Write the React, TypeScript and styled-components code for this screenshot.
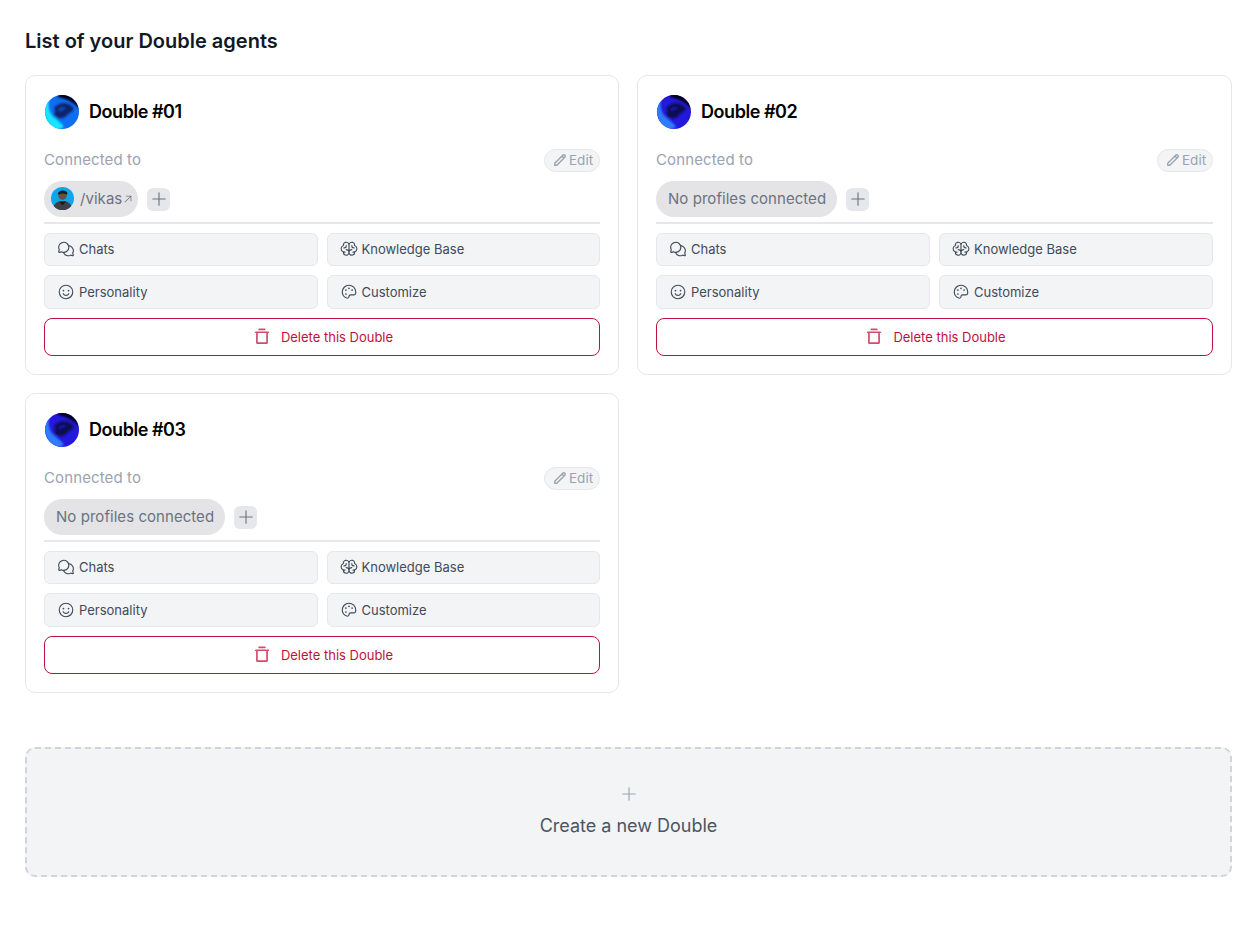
import React from 'react';
import styled, { createGlobalStyle } from 'styled-components';
import { PiChatsCircle, PiBrain, PiSmiley, PiPalette, PiTrashSimpleBold, PiPlus, PiArrowUpRight } from 'react-icons/pi';
import { HiOutlinePencil } from 'react-icons/hi';

const GlobalStyle = createGlobalStyle`
    html, body {
        margin: 0;
        padding: 0;
        background: #fff;
        font-family: Inter, "Liberation Sans", sans-serif;
    }
    * {
        box-sizing: border-box;
    }
`;

const Page = styled.main`
    padding: 29px 27px 60px 25px;
    min-height: 938px;
`;

const Heading = styled.h1`
    margin: 0 0 21px;
    font-size: 20px;
    line-height: 25px;
    font-weight: 600;
    color: #111827;
`;

const CardGrid = styled.div`
    display: grid;
    grid-template-columns: 594px 1fr;
    gap: 18px;
`;

const Card = styled.section`
    height: 300px;
    padding: 19px 18px 18px 18px;
    border: 1px solid #e5e7eb;
    border-radius: 10px;
    display: flex;
    flex-direction: column;
`;

const CardHeader = styled.div`
    display: flex;
    align-items: center;
    gap: 10px;
    height: 34px;
    padding-left: 1px;
`;

const Title = styled.h2`
    margin: 0 0 2px;
    font-size: 18px;
    font-weight: 600;
    letter-spacing: -0.025em;
    color: #000;
`;

const ConnectedRow = styled.div`
    display: flex;
    align-items: center;
    justify-content: space-between;
    margin-top: 20px;
    height: 23px;
`;

const ConnectedLabel = styled.span`
    padding-bottom: 2px;
    font-size: 15px;
    letter-spacing: 0.12px;
    color: #9ca3af;
`;

const EditButton = styled.button`
    display: flex;
    align-items: center;
    gap: 2px;
    width: 56px;
    height: 23px;
    padding: 0 0 1px 8px;
    background: #f3f4f6;
    border: 1px solid #e5e7eb;
    border-radius: 12px;
    font: 400 13.5px Inter, sans-serif;
    color: #9ca3af;
`;

const ProfileRow = styled.div`
    display: flex;
    align-items: center;
    gap: 9px;
    margin-top: 9px;
    height: 36px;
`;

const ProfilePill = styled.div<{ $linked?: boolean }>`
    display: flex;
    align-items: center;
    gap: 6px;
    height: 36px;
    padding: ${(p) => (p.$linked ? '0 4px 1px 7px' : '0 11px 1px 12px')};
    background: #e4e4e7;
    border-radius: 18px;
    font-size: 15px;
    letter-spacing: 0.05px;
    color: #6b7280;
`;

const AddButton = styled.button`
    display: flex;
    align-items: center;
    justify-content: center;
    width: 23px;
    height: 23px;
    padding: 0;
    border: 0;
    border-radius: 6px;
    background: #e5e7eb;
    color: #6b7280;
`;

const Divider = styled.hr`
    width: 100%;
    margin: 5px 0 9px;
    border: 0;
    border-top: 2px solid #e5e7eb;
`;

const ActionGrid = styled.div`
    display: grid;
    grid-template-columns: 1fr 1fr;
    grid-template-rows: 33px 34px;
    gap: 9px;
`;

const ActionButton = styled.button`
    display: flex;
    align-items: center;
    gap: 4px;
    padding: 0 12px;
    background: #f3f4f6;
    border: 1px solid #e5e7eb;
    border-radius: 6px;
    font: 400 13px Inter, sans-serif;
    color: #3f4a5a;
    &:nth-child(-n + 2) {
        padding-bottom: 1px;
    }
`;

const DeleteButton = styled.button`
    display: flex;
    align-items: center;
    justify-content: center;
    gap: 10px;
    height: 38px;
    margin-top: 9px;
    padding: 0 6px 0 8px;
    background: #fff;
    border: 1px solid #be123c;
    border-radius: 8px;
    font: 400 13px Inter, sans-serif;
    color: #be123c;
    svg {
        opacity: 0.75;
    }
`;

const CreateBox = styled.button`
    display: flex;
    flex-direction: column;
    align-items: center;
    justify-content: center;
    gap: 12px;
    width: 100%;
    height: 130px;
    margin-top: 54px;
    padding-bottom: 3px;
    background: #f3f4f6;
    border: 2px dashed #d1d5db;
    border-radius: 10px;
    font: 400 18px/22px Inter, sans-serif;
    color: #4b5563;
`;

// swirl picture used as the Double's avatar, drawn with blurred blobs
const Avatar = ({ id, base, glow, core }: { id: string; base: string; glow: string; core: string }) => (
    <svg width="34" height="34" viewBox="0 0 34 34">
        <defs>
            <clipPath id={`${id}-clip`}><circle cx="17" cy="17" r="17" /></clipPath>
            <filter id={`${id}-soft`} x="-20%" y="-20%" width="140%" height="140%"><feGaussianBlur stdDeviation="0.8" /></filter>
        </defs>
        <g clipPath={`url(#${id}-clip)`}>
            <rect width="34" height="34" fill={base} />
            <g filter={`url(#${id}-soft)`}>
                <path d="M13-2h24v20C33 10 24 4 13 2z" fill="#04041a" />
                <path d="M-2 10c2-3 4-5 6-6-1 7 0 15 6 19 3 3 7 5 9 9-3 2-6 3-9 2C3 32-2 20-2 10z" fill={glow} />
                <path d="M9 14c3-6 11-7 16-4 4 2 5 5 1 7-3 1-4 5-9 6-4 1-8-2-8-5 2-1 2-3 0-4z" fill={core} />
                <path d="M13 14c2-2 6-3 8-1-1 2-5 2-5 4-1 0-3-1-3-3z" fill={base} opacity=".55" />
            </g>
        </g>
    </svg>
);

const ProfilePhoto = () => (
    <svg width="23" height="23" viewBox="0 0 23 23">
        <clipPath id="photo"><circle cx="11.5" cy="11.5" r="11.5" /></clipPath>
        <g clipPath="url(#photo)">
            <rect width="23" height="23" fill="#0ea5e9" />
            <circle cx="11.5" cy="8.5" r="4.2" fill="#6b4e40" />
            <path d="M7 7c0-4 9-5 9.500 0l-1 .5c-2-1.500-5-1.500-7.500 0z" fill="#1c1917" />
            <path d="M2 23c0-6 4-9 9.500-9S21 17 21 23z" fill="#3f3f46" />
            <path d="M8 14.500l3.500 4 3.500-4z" fill="#1c1917" />
        </g>
    </svg>
);

const doubles = [
    { name: 'Double #01', profile: '/vikas', base: '#0f6df0', glow: '#12e6ff', core: '#10206a' },
    { name: 'Double #02', base: '#2418dc', glow: '#2f7dff', core: '#0d1050' },
    { name: 'Double #03', base: '#2418dc', glow: '#2f7dff', core: '#0d1050' },
];

const App = () => {
    return (
        <Page>
            <GlobalStyle />
            <Heading>List of your Double agents</Heading>
            <CardGrid>
                {doubles.map((d, i) => (
                    <Card key={d.name}>
                        <CardHeader>
                            <Avatar id={`avatar-${i}`} base={d.base} glow={d.glow} core={d.core} />
                            <Title>{d.name}</Title>
                        </CardHeader>
                        <ConnectedRow>
                            <ConnectedLabel>Connected to</ConnectedLabel>
                            <EditButton><HiOutlinePencil size={14} style={{ strokeWidth: 2.4 }} />Edit</EditButton>
                        </ConnectedRow>
                        <ProfileRow>
                            {d.profile ? (
                                <ProfilePill $linked>
                                    <ProfilePhoto />
                                    <span>{d.profile}</span>
                                    <PiArrowUpRight size={12} style={{ marginLeft: -6 }} />
                                </ProfilePill>
                            ) : (
                                <ProfilePill>No profiles connected</ProfilePill>
                            )}
                            <AddButton><PiPlus size={18} /></AddButton>
                        </ProfileRow>
                        <Divider />
                        <ActionGrid>
                            <ActionButton><PiChatsCircle size={18} />Chats</ActionButton>
                            <ActionButton><PiBrain size={18} />Knowledge Base</ActionButton>
                            <ActionButton><PiSmiley size={18} />Personality</ActionButton>
                            <ActionButton><PiPalette size={18} />Customize</ActionButton>
                        </ActionGrid>
                        <DeleteButton><PiTrashSimpleBold size={18} />Delete this Double</DeleteButton>
                    </Card>
                ))}
            </CardGrid>
            <CreateBox>
                <PiPlus size={18} color="#9ca3af" />
                Create a new Double
            </CreateBox>
        </Page>
    );
};

export default App;
